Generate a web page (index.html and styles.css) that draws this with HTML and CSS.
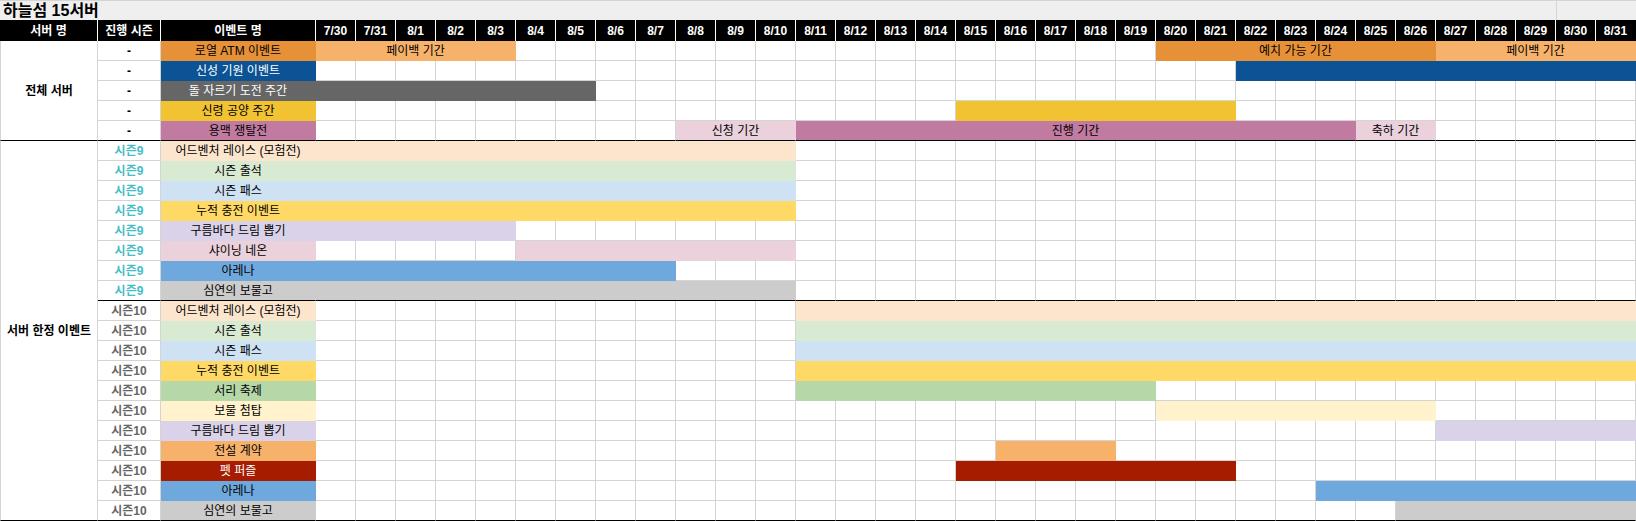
FILE: index.html
```html
<!DOCTYPE html>
<html lang="ko">
<head>
<meta charset="utf-8">
<title>하늘섬 15서버</title>
<link rel="stylesheet" href="styles.css">
</head>
<body>
<div class="sheet">
  <!-- title -->
  <div class="title sp34">하늘섬 15서버</div>
  <div class="title-end sp2"></div>

  <!-- header -->
  <div class="hd">서버 명</div>
  <div class="hd">진행 시즌</div>
  <div class="hd">이벤트 명</div>
  <div class="hd">7/30</div><div class="hd">7/31</div>
  <div class="hd">8/1</div><div class="hd">8/2</div><div class="hd">8/3</div><div class="hd">8/4</div><div class="hd">8/5</div>
  <div class="hd">8/6</div><div class="hd">8/7</div><div class="hd">8/8</div><div class="hd">8/9</div><div class="hd">8/10</div>
  <div class="hd">8/11</div><div class="hd">8/12</div><div class="hd">8/13</div><div class="hd">8/14</div><div class="hd">8/15</div>
  <div class="hd">8/16</div><div class="hd">8/17</div><div class="hd">8/18</div><div class="hd">8/19</div><div class="hd">8/20</div>
  <div class="hd">8/21</div><div class="hd">8/22</div><div class="hd">8/23</div><div class="hd">8/24</div><div class="hd">8/25</div>
  <div class="hd">8/26</div><div class="hd">8/27</div><div class="hd">8/28</div><div class="hd">8/29</div><div class="hd">8/30</div>
  <div class="hd last">8/31</div>

  <!-- 전체 서버 -->
  <div class="side rs5 end">전체 서버</div>

  <!-- R1 로열 ATM 이벤트 -->
  <div class="sz">-</div>
  <div class="orange">로열 ATM 이벤트</div>
  <div class="lorange sp5">페이백 기간</div>
  <div></div><div></div><div></div><div></div><div></div><div></div><div></div><div></div>
  <div></div><div></div><div></div><div></div><div></div><div></div><div></div><div></div>
  <div class="orange sp7">예치 가능 기간</div>
  <div class="lorange sp5">페이백 기간</div>

  <!-- R2 신성 기원 이벤트 -->
  <div class="sz">-</div>
  <div class="blue inv">신성 기원 이벤트</div>
  <div></div><div></div><div></div><div></div><div></div><div></div><div></div><div></div><div></div><div></div>
  <div></div><div></div><div></div><div></div><div></div><div></div><div></div><div></div><div></div><div></div>
  <div></div><div></div><div></div>
  <div class="blue sp10"></div>

  <!-- R3 돌 자르기 도전 주간 -->
  <div class="sz">-</div>
  <div class="gray inv">돌 자르기 도전 주간</div>
  <div class="gray sp7"></div>
  <div></div><div></div><div></div><div></div><div></div><div></div><div></div><div></div><div></div><div></div>
  <div></div><div></div><div></div><div></div><div></div><div></div><div></div><div></div><div></div><div></div>
  <div></div><div></div><div></div><div></div><div></div><div></div>

  <!-- R4 신령 공양 주간 -->
  <div class="sz">-</div>
  <div class="yellow">신령 공양 주간</div>
  <div></div><div></div><div></div><div></div><div></div><div></div><div></div><div></div>
  <div></div><div></div><div></div><div></div><div></div><div></div><div></div><div></div>
  <div class="yellow sp7"></div>
  <div></div><div></div><div></div><div></div><div></div><div></div><div></div><div></div><div></div><div></div>

  <!-- R5 용맥 쟁탈전 -->
  <div class="sz end">-</div>
  <div class="mauve end">용맥 쟁탈전</div>
  <div class="end"></div><div class="end"></div><div class="end"></div><div class="end"></div><div class="end"></div>
  <div class="end"></div><div class="end"></div><div class="end"></div><div class="end"></div>
  <div class="pink sp3 end">신청 기간</div>
  <div class="mauve sp14 end">진행 기간</div>
  <div class="pink sp2 end">축하 기간</div>
  <div class="end"></div><div class="end"></div><div class="end"></div><div class="end"></div><div class="end"></div>

  <!-- 서버 한정 이벤트 -->
  <div class="side rs19 end">서버 한정 이벤트</div>

  <!-- S9-1 -->
  <div class="sz s9">시즌9</div>
  <div class="peach">어드벤처 레이스 (모험전)</div>
  <div class="peach sp12"></div>
  <div></div><div></div><div></div><div></div><div></div><div></div><div></div><div></div><div></div><div></div>
  <div></div><div></div><div></div><div></div><div></div><div></div><div></div><div></div><div></div><div></div>
  <div></div>

  <!-- S9-2 -->
  <div class="sz s9">시즌9</div>
  <div class="green">시즌 출석</div>
  <div class="green sp12"></div>
  <div></div><div></div><div></div><div></div><div></div><div></div><div></div><div></div><div></div><div></div>
  <div></div><div></div><div></div><div></div><div></div><div></div><div></div><div></div><div></div><div></div>
  <div></div>

  <!-- S9-3 -->
  <div class="sz s9">시즌9</div>
  <div class="lblue">시즌 패스</div>
  <div class="lblue sp12"></div>
  <div></div><div></div><div></div><div></div><div></div><div></div><div></div><div></div><div></div><div></div>
  <div></div><div></div><div></div><div></div><div></div><div></div><div></div><div></div><div></div><div></div>
  <div></div>

  <!-- S9-4 -->
  <div class="sz s9">시즌9</div>
  <div class="gold">누적 충전 이벤트</div>
  <div class="gold sp12"></div>
  <div></div><div></div><div></div><div></div><div></div><div></div><div></div><div></div><div></div><div></div>
  <div></div><div></div><div></div><div></div><div></div><div></div><div></div><div></div><div></div><div></div>
  <div></div>

  <!-- S9-5 -->
  <div class="sz s9">시즌9</div>
  <div class="lav">구름바다 드림 뽑기</div>
  <div class="lav sp5"></div>
  <div></div><div></div><div></div><div></div><div></div><div></div><div></div><div></div><div></div><div></div>
  <div></div><div></div><div></div><div></div><div></div><div></div><div></div><div></div><div></div><div></div>
  <div></div><div></div><div></div><div></div><div></div><div></div><div></div><div></div>

  <!-- S9-6 -->
  <div class="sz s9">시즌9</div>
  <div class="pink">샤이닝 네온</div>
  <div></div><div></div><div></div><div></div><div></div>
  <div class="pink sp7"></div>
  <div></div><div></div><div></div><div></div><div></div><div></div><div></div><div></div><div></div><div></div>
  <div></div><div></div><div></div><div></div><div></div><div></div><div></div><div></div><div></div><div></div>
  <div></div>

  <!-- S9-7 -->
  <div class="sz s9">시즌9</div>
  <div class="sky">아레나</div>
  <div class="sky sp9"></div>
  <div></div><div></div><div></div><div></div><div></div><div></div><div></div><div></div><div></div><div></div>
  <div></div><div></div><div></div><div></div><div></div><div></div><div></div><div></div><div></div><div></div>
  <div></div><div></div><div></div><div></div>

  <!-- S9-8 -->
  <div class="sz s9 end">시즌9</div>
  <div class="silver end">심연의 보물고</div>
  <div class="silver sp12 end"></div>
  <div class="end"></div><div class="end"></div><div class="end"></div><div class="end"></div><div class="end"></div>
  <div class="end"></div><div class="end"></div><div class="end"></div><div class="end"></div><div class="end"></div>
  <div class="end"></div><div class="end"></div><div class="end"></div><div class="end"></div><div class="end"></div>
  <div class="end"></div><div class="end"></div><div class="end"></div><div class="end"></div><div class="end"></div>
  <div class="end"></div>

  <!-- S10-1 -->
  <div class="sz s10">시즌10</div>
  <div class="peach">어드벤처 레이스 (모험전)</div>
  <div></div><div></div><div></div><div></div><div></div><div></div><div></div><div></div><div></div><div></div>
  <div></div><div></div>
  <div class="peach sp21"></div>

  <!-- S10-2 -->
  <div class="sz s10">시즌10</div>
  <div class="green">시즌 출석</div>
  <div></div><div></div><div></div><div></div><div></div><div></div><div></div><div></div><div></div><div></div>
  <div></div><div></div>
  <div class="green sp21"></div>

  <!-- S10-3 -->
  <div class="sz s10">시즌10</div>
  <div class="lblue">시즌 패스</div>
  <div></div><div></div><div></div><div></div><div></div><div></div><div></div><div></div><div></div><div></div>
  <div></div><div></div>
  <div class="lblue sp21"></div>

  <!-- S10-4 -->
  <div class="sz s10">시즌10</div>
  <div class="gold">누적 충전 이벤트</div>
  <div></div><div></div><div></div><div></div><div></div><div></div><div></div><div></div><div></div><div></div>
  <div></div><div></div>
  <div class="gold sp21"></div>

  <!-- S10-5 -->
  <div class="sz s10">시즌10</div>
  <div class="sage">서리 축제</div>
  <div></div><div></div><div></div><div></div><div></div><div></div><div></div><div></div><div></div><div></div>
  <div></div><div></div>
  <div class="sage sp9"></div>
  <div></div><div></div><div></div><div></div><div></div><div></div><div></div><div></div><div></div><div></div>
  <div></div><div></div>

  <!-- S10-6 -->
  <div class="sz s10">시즌10</div>
  <div class="cream">보물 첨탑</div>
  <div></div><div></div><div></div><div></div><div></div><div></div><div></div><div></div><div></div><div></div>
  <div></div><div></div><div></div><div></div><div></div><div></div><div></div><div></div><div></div><div></div>
  <div></div>
  <div class="cream sp7"></div>
  <div></div><div></div><div></div><div></div><div></div>

  <!-- S10-7 -->
  <div class="sz s10">시즌10</div>
  <div class="lav">구름바다 드림 뽑기</div>
  <div></div><div></div><div></div><div></div><div></div><div></div><div></div><div></div><div></div><div></div>
  <div></div><div></div><div></div><div></div><div></div><div></div><div></div><div></div><div></div><div></div>
  <div></div><div></div><div></div><div></div><div></div><div></div><div></div><div></div>
  <div class="lav sp5"></div>

  <!-- S10-8 -->
  <div class="sz s10">시즌10</div>
  <div class="lorange">전설 계약</div>
  <div></div><div></div><div></div><div></div><div></div><div></div><div></div><div></div><div></div><div></div>
  <div></div><div></div><div></div><div></div><div></div><div></div><div></div>
  <div class="lorange sp3"></div>
  <div></div><div></div><div></div><div></div><div></div><div></div><div></div><div></div><div></div><div></div>
  <div></div><div></div><div></div>

  <!-- S10-9 -->
  <div class="sz s10">시즌10</div>
  <div class="red inv">펫 퍼즐</div>
  <div></div><div></div><div></div><div></div><div></div><div></div><div></div><div></div><div></div><div></div>
  <div></div><div></div><div></div><div></div><div></div><div></div>
  <div class="red sp7"></div>
  <div></div><div></div><div></div><div></div><div></div><div></div><div></div><div></div><div></div><div></div>

  <!-- S10-10 -->
  <div class="sz s10">시즌10</div>
  <div class="sky">아레나</div>
  <div></div><div></div><div></div><div></div><div></div><div></div><div></div><div></div><div></div><div></div>
  <div></div><div></div><div></div><div></div><div></div><div></div><div></div><div></div><div></div><div></div>
  <div></div><div></div><div></div><div></div><div></div>
  <div class="sky sp8"></div>

  <!-- S10-11 -->
  <div class="sz s10 end">시즌10</div>
  <div class="silver end">심연의 보물고</div>
  <div class="end"></div><div class="end"></div><div class="end"></div><div class="end"></div><div class="end"></div>
  <div class="end"></div><div class="end"></div><div class="end"></div><div class="end"></div><div class="end"></div>
  <div class="end"></div><div class="end"></div><div class="end"></div><div class="end"></div><div class="end"></div>
  <div class="end"></div><div class="end"></div><div class="end"></div><div class="end"></div><div class="end"></div>
  <div class="end"></div><div class="end"></div><div class="end"></div><div class="end"></div><div class="end"></div>
  <div class="end"></div><div class="end"></div>
  <div class="silver sp6 end"></div>
</div>
</body>
</html>
```

FILE: styles.css
```css
html, body {
  margin: 0;
  padding: 0;
  background: #ffffff;
}

.sheet {
  display: grid;
  grid-template-columns: 98px 63px 155px repeat(33, 40px);
  grid-template-rows: 20px 21px repeat(24, 20px);
  width: 1636px;
  font-family: "Liberation Sans", "Noto Sans CJK KR", sans-serif;
  font-size: 12px;
  color: #000000;
}

.sheet > div {
  box-sizing: border-box;
  display: flex;
  align-items: center;
  justify-content: center;
  white-space: nowrap;
  overflow: visible;
  border-right: 1px solid #d4d4d4;
  border-bottom: 1px solid #d4d4d4;
  background: #ffffff;
  line-height: 1;
}

/* spans */
.sp2 { grid-column: span 2; }
.sp3 { grid-column: span 3; }
.sp5 { grid-column: span 5; }
.sp6 { grid-column: span 6; }
.sp7 { grid-column: span 7; }
.sp8 { grid-column: span 8; }
.sp9 { grid-column: span 9; }
.sp10 { grid-column: span 10; }
.sp12 { grid-column: span 12; }
.sp14 { grid-column: span 14; }
.sp21 { grid-column: span 21; }
.sp34 { grid-column: span 34; }
.rs5 { grid-row: span 5; }
.rs19 { grid-row: span 19; }

/* title row */
.sheet > .title {
  justify-content: flex-start;
  padding-left: 3px;
  background: #efefef;
  border-top: 1px solid #d4d4d4;
  border-right: 0;
  border-bottom: 0;
  font-size: 16px;
  font-weight: bold;
}
.sheet > .title-end {
  background: #efefef;
  border-top: 1px solid #d4d4d4;
  border-left: 1px solid #d4d4d4;
  border-right: 0;
  border-bottom: 0;
}

/* header row */
.sheet > .hd {
  background: #000000;
  color: #ffffff;
  font-weight: bold;
  border-right: 1px solid #ffffff;
  border-bottom: 0;
}
.sheet > .hd.last { border-right-color: #000000; }

/* left columns */
.sheet > .side {
  border-left: 1px solid #d4d4d4;
  font-weight: bold;
}
.sheet > .sz { font-weight: bold; }
.sheet > .s9 { color: #46bdc6; }
.sheet > .s10 { color: #666666; }

/* fills */
.sheet > .orange { background: #e69138; border-color: #e69138; }
.sheet > .lorange { background: #f6b26b; border-color: #f6b26b; }
.sheet > .blue { background: #0b5394; border-color: #0b5394; }
.sheet > .gray { background: #666666; border-color: #666666; }
.sheet > .yellow { background: #f1c232; border-color: #f1c232; }
.sheet > .mauve { background: #c27ba0; border-color: #c27ba0; }
.sheet > .pink { background: #ead1dc; border-color: #ead1dc; }
.sheet > .peach { background: #fce5cd; border-color: #fce5cd; }
.sheet > .green { background: #d9ead3; border-color: #d9ead3; }
.sheet > .lblue { background: #cfe2f3; border-color: #cfe2f3; }
.sheet > .gold { background: #ffd966; border-color: #ffd966; }
.sheet > .lav { background: #d9d2e9; border-color: #d9d2e9; }
.sheet > .sky { background: #6fa8dc; border-color: #6fa8dc; }
.sheet > .silver { background: #cccccc; border-color: #cccccc; }
.sheet > .sage { background: #b6d7a8; border-color: #b6d7a8; }
.sheet > .cream { background: #fff2cc; border-color: #fff2cc; }
.sheet > .red { background: #a61c00; border-color: #a61c00; }
.sheet > .inv { color: #ffffff; }

/* section separators */
.sheet > .end { border-bottom-color: #000000; }
```
